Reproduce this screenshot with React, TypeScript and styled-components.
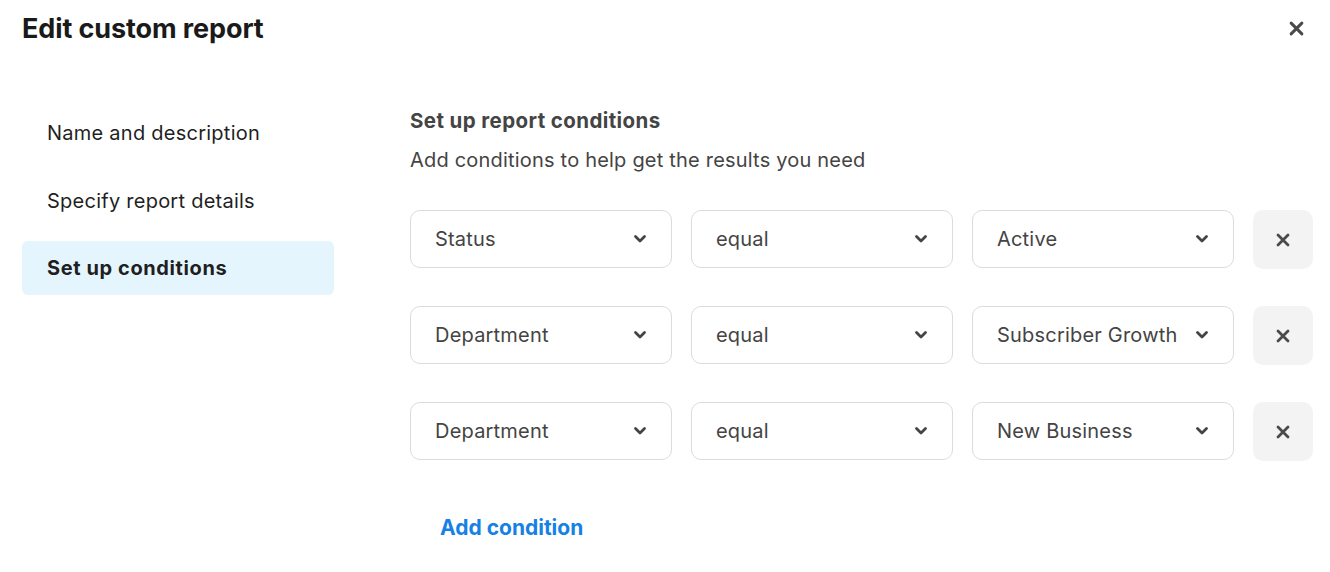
import styled, { createGlobalStyle } from 'styled-components';

const GlobalStyle = createGlobalStyle`
  body {
    margin: 0;
    background: #fff;
    font-family: Inter, "Noto Sans", sans-serif;
    -webkit-font-smoothing: antialiased;
  }
`;

type Condition = {
	field: string
	operator: string
	value: string
};

const conditions: Condition[] = [
	{ field: 'Status', operator: 'equal', value: 'Active' },
	{ field: 'Department', operator: 'equal', value: 'Subscriber Growth' },
	{ field: 'Department', operator: 'equal', value: 'New Business' },
];

const steps = ['Name and description', 'Specify report details', 'Set up conditions'];

const Chevron = () => (
	<svg width="14" height="10" viewBox="0 0 14 10" fill="none">
		<path d="M2.5 2.5 L7 7 L11.5 2.5" stroke="#444" strokeWidth="2.8" strokeLinecap="round" strokeLinejoin="round" />
	</svg>
);

const Cross = ({ size = 14 }: { size?: number }) => (
	<svg width={size} height={size} viewBox="0 0 14 14" fill="none">
		<path d="M2 2 L12 12 M12 2 L2 12" stroke="#4a4a4a" strokeWidth="2.8" strokeLinecap="round" />
	</svg>
);

const Select = ({ label }: { label: string }) => (
	<SelectBox type="button">
		<span>{label}</span>
		<Chevron />
	</SelectBox>
);

export default function App() {
	return (
		<>
			<GlobalStyle />
			<Modal>
				<Header>
					<Title>Edit custom report</Title>
					<CloseButton type="button" aria-label="Close">
						<Cross size={15} />
					</CloseButton>
				</Header>
				<Body>
					<Nav>
						{steps.map((step, i) => (
							<NavItem key={step} $active={i === steps.length - 1}>{step}</NavItem>
						))}
					</Nav>
					<Content>
						<SectionTitle>Set up report conditions</SectionTitle>
						<SectionText>Add conditions to help get the results you need</SectionText>
						<Rows>
							{conditions.map((c, i) => (
								<Row key={i}>
									<Select label={c.field} />
									<Select label={c.operator} />
									<Select label={c.value} />
									<RemoveButton type="button" aria-label="Remove condition">
										<Cross />
									</RemoveButton>
								</Row>
							))}
						</Rows>
						<AddButton type="button">Add condition</AddButton>
					</Content>
				</Body>
			</Modal>
		</>
	);
}

const Modal = styled.div`
    width: 1330px;
    height: 572px;
    box-sizing: border-box;
    padding: 0 0 0 22px;
`;

const Header = styled.header`
    height: 56px;
    display: flex;
    align-items: center;
    justify-content: space-between;
    padding-right: 20px;
`;

const Title = styled.h1`
    margin: 0;
    font-size: 27px;
    font-weight: 700;
    color: #1a1a1a;
    letter-spacing: -0.1px;
`;

const CloseButton = styled.button`
    width: 28px;
    height: 28px;
    padding: 0;
    border: none;
    background: none;
    display: flex;
    align-items: center;
    justify-content: center;
`;

const Body = styled.div`
    display: flex;
    gap: 76px;
    padding-top: 50px;
`;

const Nav = styled.nav`
    width: 312px;
    flex-shrink: 0;
    display: flex;
    flex-direction: column;
    gap: 13.5px;
`;

const NavItem = styled.div<{ $active?: boolean }>`
    height: 54px;
    display: flex;
    align-items: center;
    padding: 0 25px;
    border-radius: 6px;
    font-size: 20px;
    letter-spacing: ${p => (p.$active ? '0.6px' : '0.25px')};
    font-weight: ${p => (p.$active ? 700 : 400)};
    color: #1f1f1f;
    background: ${p => (p.$active ? '#e5f5fe' : 'transparent')};
`;

const Content = styled.div`
    flex: 1;
    display: flex;
    flex-direction: column;
    align-items: flex-start;
`;

const SectionTitle = styled.h2`
    margin: 0;
    line-height: 30px;
    font-size: 20.5px;
    letter-spacing: 0.4px;
    font-weight: 700;
    color: #444;
`;

const SectionText = styled.p`
    margin: 10px 0 0;
    line-height: 28px;
    font-size: 20px;
    letter-spacing: 0.2px;
    color: #444;
`;

const Rows = styled.div`
    margin-top: 36px;
    display: flex;
    flex-direction: column;
    gap: 37px;
`;

const Row = styled.div`
    display: flex;
    gap: 19px;
`;

const SelectBox = styled.button`
    width: 262px;
    height: 58px;
    box-sizing: border-box;
    padding: 0 24px;
    display: flex;
    align-items: center;
    justify-content: space-between;
    border: 1px solid #dcdcdc;
    border-radius: 10px;
    background: #fff;
    font-family: inherit;
    font-size: 20px;
    letter-spacing: 0.2px;
    color: #444;
    text-align: left;
`;

const RemoveButton = styled.button`
    width: 60px;
    height: 59px;
    border: none;
    border-radius: 10px;
    background: #f3f3f3;
    display: flex;
    align-items: center;
    justify-content: center;
    padding: 0;
`;

const AddButton = styled.button`
    margin: 54px 0 0 30px;
    padding: 0;
    border: none;
    background: none;
    font-family: inherit;
    font-size: 21px;
    font-weight: 700;
    color: #1681e4;
`;
